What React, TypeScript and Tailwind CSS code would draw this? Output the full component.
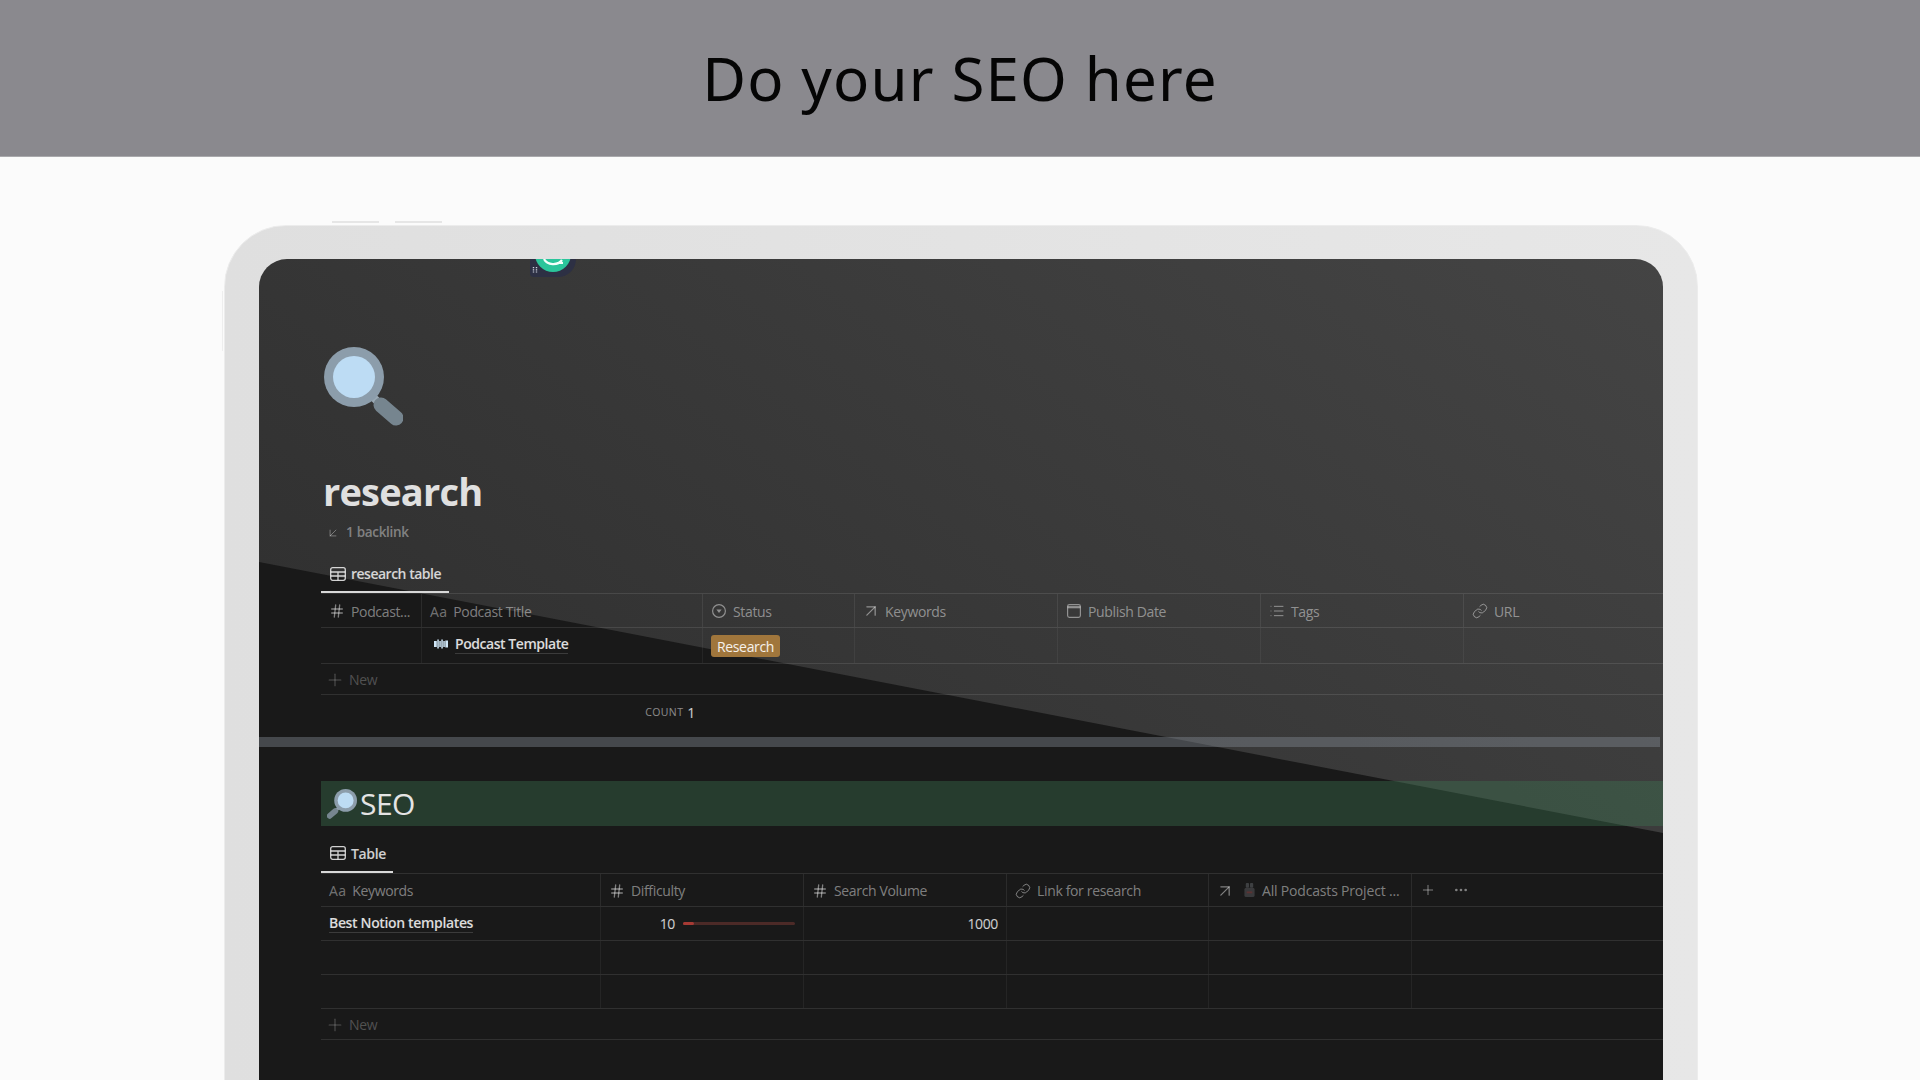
import React from "react";
import { ArrowDownLeft, ArrowUpRight, Hash, Link, List, Plus, Ellipsis } from "lucide-react";

const uiFont = "font-['Open_Sans',sans-serif]";

function Magnifier({ className }: { className?: string }) {
  return (
    <svg viewBox="0 0 79 79" className={className}>
      <path d="M49 50 L56 57" stroke="#9aa9b4" strokeWidth="8" />
      <path d="M57 58 L72 71" stroke="#76858f" strokeWidth="15" strokeLinecap="round" />
      <circle cx="30" cy="30" r="30" fill="#8c9dab" />
      <circle cx="30" cy="30" r="21" fill="#bddcf4" />
    </svg>
  );
}

function TableIcon({ className }: { className?: string }) {
  return (
    <svg viewBox="0 0 16 14" fill="none" stroke="currentColor" strokeWidth="1.3" className={className}>
      <rect x="0.7" y="0.7" width="14.6" height="12.6" rx="2" />
      <path d="M0.7 5h14.6M0.7 9h14.6M8 5v8.3" />
    </svg>
  );
}

function SelectIcon({ className }: { className?: string }) {
  return (
    <svg viewBox="0 0 16 16" fill="none" stroke="currentColor" strokeWidth="1.2" className={className}>
      <circle cx="8" cy="8" r="6.4" />
      <path d="M5.4 6.6h5.2L8 10z" fill="currentColor" stroke="none" />
    </svg>
  );
}

function CalendarIcon({ className }: { className?: string }) {
  return (
    <svg viewBox="0 0 16 16" fill="none" stroke="currentColor" strokeWidth="1.2" className={className}>
      <rect x="1.6" y="1.6" width="12.8" height="12.8" rx="1.8" />
      <path d="M1.6 4.2h12.8" strokeWidth="2.2" />
    </svg>
  );
}

function WaveIcon() {
  return (
    <svg viewBox="0 0 14 10" className="w-[14px] h-[10px] shrink-0">
      <path d="M0 2h2.8v6H0zM3.3 0.5h1.5v9H3.3zM5.3 2h1.5v6H5.3zM7.3 0.5h1.5v9H7.3zM9.3 2h1.5v6H9.3zM11.3 1.5H14v7h-2.7z" fill="#cfe6f7" />
    </svg>
  );
}

function MicIcon() {
  return (
    <svg viewBox="0 0 14 16" className="w-[13px] h-[15px] shrink-0">
      <rect x="3" y="0" width="3.5" height="5" rx="1" fill="#3e4042" />
      <rect x="7.5" y="0" width="3.5" height="5" rx="1" fill="#3e4042" />
      <rect x="1.5" y="5" width="11" height="10" rx="2" fill="#3a3a3c" />
      <path d="M4 9h6v2H4z" fill="#5c3333" />
    </svg>
  );
}

function GrammarlyBadge() {
  return (
    <svg viewBox="0 0 46 18" className="absolute left-[271px] top-0 w-[46px] h-[18px]">
      <path d="M0 0h46a18 18 0 0 1-18 18H4a4 4 0 0 1-4-4z" fill="#2d3044" />
      <circle cx="23" cy="-5" r="18" fill="#2bc59b" />
      <path d="M14 0a10 8 0 0 0 18 1M27 4h6" fill="none" stroke="#f4fffb" strokeWidth="2.2" />
      <path d="M3.5 8v6M6.5 8v6" stroke="#cfd2e0" strokeWidth="1.4" strokeDasharray="1.2 1" />
    </svg>
  );
}

function HeadCell({
  icon,
  label,
  labelClass = "",
  divider = true,
}: {
  icon?: React.ReactNode;
  label?: string;
  labelClass?: string;
  divider?: boolean;
}) {
  return (
    <div className={`flex items-center gap-[6px] px-2 pt-[1px] text-white/45 whitespace-nowrap overflow-hidden ${divider ? "border-r border-white/8" : ""}`}>
      {icon}
      {label && <span className={labelClass}>{label}</span>}
    </div>
  );
}

const AaIcon = () => <span className="text-[14px] text-white/40 tracking-[0.3px] shrink-0">Aa</span>;
const iconClass = "w-4 h-4 shrink-0 text-white/45";
const thinIcon = `${iconClass} [stroke-width:1.5]`;

const researchCols = "grid-cols-[101px_281px_152px_203px_203px_203px_200px]";
const seoCols = "grid-cols-[280px_203px_203px_202px_203px_251px]";

function ResearchTable() {
  return (
    <div className="text-[14px] tracking-[-0.35px]">
      <div className={`grid ${researchCols} h-[34px] border-t border-white/10`}>
        <HeadCell icon={<Hash className={iconClass} />} label="Podcast..." />
        <HeadCell icon={<AaIcon />} label="Podcast Title" />
        <HeadCell icon={<SelectIcon className={iconClass} />} label="Status" />
        <HeadCell icon={<ArrowUpRight className={`${thinIcon} scale-125`} />} label="Keywords" />
        <HeadCell icon={<CalendarIcon className={iconClass} />} label="Publish Date" />
        <HeadCell icon={<List className={thinIcon} />} label="Tags" />
        <HeadCell icon={<Link className={thinIcon} />} label="URL" divider={false} />
      </div>
      <div className={`grid ${researchCols} h-[36px] border-t border-white/10`}>
        <div className="border-r border-white/5" />
        <div className="flex items-center gap-[7px] pl-[12px] pb-[3px] border-r border-white/5 text-white/85 font-semibold tracking-[-0.45px]">
          <WaveIcon />
          <span className="border-b border-white/15 leading-[18px]">Podcast Template</span>
        </div>
        <div className="flex items-center pl-2 pt-[1px] border-r border-white/5">
          <span className="bg-[#a0763c] text-white/90 rounded-[3px] px-[6px] h-[22px] leading-[23px]">Research</span>
        </div>
        <div className="border-r border-white/5" />
        <div className="border-r border-white/5" />
        <div className="border-r border-white/5" />
        <div />
      </div>
      <NewRow />
      <div className={`grid ${researchCols} h-[36px]`}>
        <div />
        <div className="flex items-center justify-end gap-[4px] pr-2">
          <span className="text-[10.5px] tracking-[0.4px] text-white/50">COUNT</span>
          <span className="text-white/80 pb-[2px]">1</span>
        </div>
      </div>
    </div>
  );
}

function NewRow() {
  return (
    <div className="flex items-center gap-[6px] h-[32px] pl-[6px] pt-[1px] border-t border-b border-white/10 text-white/25">
      <Plus className="w-4 h-4 scale-125 [stroke-width:1.3]" />
      <span>New</span>
    </div>
  );
}

function SeoTable() {
  const blank = (
    <div className={`grid ${seoCols} h-[34px] border-t border-white/10`}>
      {[0, 1, 2, 3, 4].map((i) => (
        <div key={i} className="border-r border-white/5" />
      ))}
    </div>
  );
  return (
    <div className="text-[14px] tracking-[-0.35px]">
      <div className={`grid ${seoCols} h-[33px] border-t border-white/10`}>
        <HeadCell icon={<AaIcon />} label="Keywords" />
        <HeadCell icon={<Hash className={iconClass} />} label="Difficulty" />
        <HeadCell icon={<Hash className={iconClass} />} label="Search Volume" />
        <HeadCell icon={<Link className={thinIcon} />} label="Link for research" />
        <HeadCell
          icon={
            <>
              <ArrowUpRight className={`${thinIcon} scale-125 mr-1`} />
              <MicIcon />
            </>
          }
          label="All Podcasts Project ..."
          labelClass="tracking-[-0.18px]"
        />
        <div className="flex items-center gap-[17px] pl-2 text-white/45">
          <Plus className="w-4 h-4 [stroke-width:1.5]" />
          <Ellipsis className="w-4 h-4" />
        </div>
      </div>
      <div className={`grid ${seoCols} h-[34px] border-t border-white/10`}>
        <div className="flex items-center px-2 border-r border-white/5 text-white/85 font-semibold">
          <span className="border-b border-white/15 leading-[18px]">Best Notion templates</span>
        </div>
        <div className="flex items-center justify-end gap-2 pr-2 border-r border-white/5 text-white/80">
          <span>10</span>
          <div className="w-[112px] h-[3px] bg-[#4c2a27] rounded-full">
            <div className="w-[11px] h-[3px] bg-[#a63a34] rounded-full" />
          </div>
        </div>
        <div className="flex items-center justify-end pr-2 border-r border-white/5 text-white/80">1000</div>
        <div className="border-r border-white/5" />
        <div className="border-r border-white/5" />
        <div />
      </div>
      {blank}
      {blank}
      <NewRow />
    </div>
  );
}

export default function App() {
  return (
    <div className={`w-[1920px] h-[1080px] overflow-hidden bg-[#fbfbfb] ${uiFont}`}>
      <header className="h-[157px] bg-[#8a898e] border-b border-[#a9a9ac] flex items-center justify-center">
        <h1 className="text-[60px] leading-none tracking-[1.15px] text-[#050505] font-['Noto_Sans',sans-serif]">Do your SEO here</h1>
      </header>

      <div className="relative ml-[224px] mt-[68px] w-[1474px] h-[1000px] rounded-t-[62px] bg-[linear-gradient(90deg,#dfdfdf,#e7e7e7)] border border-[#ececec] pt-[33px] pl-[34px] pr-[34px]">
        <div className="absolute -top-[5px] left-[107px] w-[47px] h-[2px] bg-[#e6e6e6]" />
        <div className="absolute -top-[5px] left-[170px] w-[47px] h-[2px] bg-[#e6e6e6]" />
        <div className="absolute -left-[3px] top-[65px] w-px h-[60px] bg-[#eeeeee]" />

        <main className="relative w-[1404px] h-[960px] rounded-t-[28px] overflow-hidden bg-[linear-gradient(37deg,#282828,#444444)]">
          <div className="absolute inset-0 bg-[#191919] [clip-path:polygon(0_303px,1404px_574px,1404px_960px,0_960px)]" />

          <GrammarlyBadge />

          <div className="relative text-white">
            <div className="pl-[65px] pt-[88px]">
              <Magnifier className="w-[79px] h-[79px]" />
            </div>
            <div className="pl-[62px] mt-[41px]">
              <h2 className="h-[48px] pl-[2px] leading-[48px] text-[38px] font-bold tracking-[-0.8px] text-[#e0e0e0]">research</h2>
              <div className="mt-[5px] h-[24px] flex items-center gap-[6px] pl-[5px] pt-[1px] text-[13.5px] font-semibold text-white/40 tracking-[-0.3px]">
                <ArrowDownLeft className="w-[14px] h-[14px] [stroke-width:1.5]" />
                <span>1 backlink</span>
              </div>
              <div className="mt-[12px] h-[37px] w-[128px] flex items-center gap-[5px] pl-[9px] border-b-2 border-[#d8d8d8] text-[14px] font-semibold text-white/80 tracking-[-0.5px]">
                <TableIcon className="w-[16px] h-[14px] shrink-0" />
                <span>research table</span>
              </div>
              <ResearchTable />
            </div>

            <div className="mt-[6px] h-[10px] w-[1401px] bg-[#868f98]/40" />

            <div className="pl-[62px] mt-[34px]">
              <div className="h-[45px] bg-[#3d7a53]/36 flex items-center gap-[3px] pl-[6px]">
                <Magnifier className="w-[30px] h-[30px] -scale-x-100" />
                <span className="text-[30px] font-medium tracking-[-0.5px] text-[#e4e4e4]">SEO</span>
              </div>
              <div className="h-[47px] w-[72px] flex items-end">
                <div className="w-full h-[36px] flex items-center gap-[5px] pl-[9px] pb-[2px] border-b-2 border-[#d8d8d8] text-[14px] font-semibold text-white/80 tracking-[-0.35px]">
                  <TableIcon className="w-[16px] h-[14px] shrink-0" />
                  <span>Table</span>
                </div>
              </div>
              <SeoTable />
            </div>
          </div>
        </main>
      </div>
    </div>
  );
}
